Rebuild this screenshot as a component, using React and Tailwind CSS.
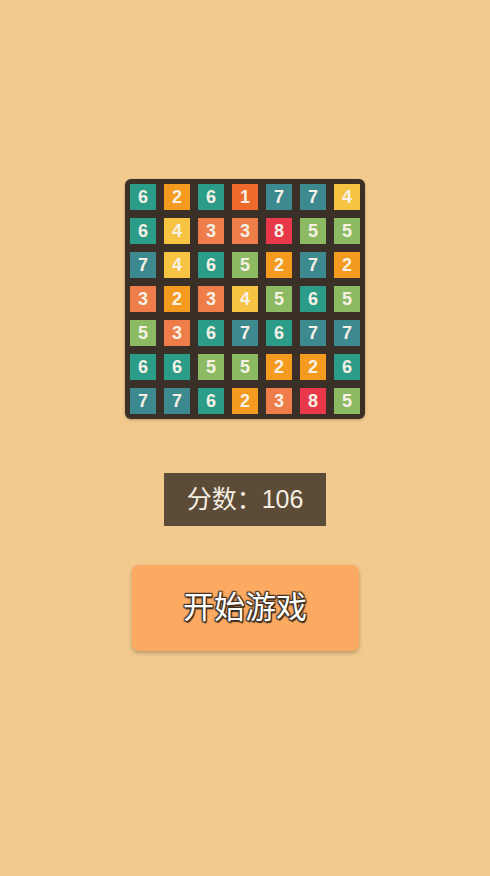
const board = [
  [6, 2, 6, 1, 7, 7, 4],
  [6, 4, 3, 3, 8, 5, 5],
  [7, 4, 6, 5, 2, 7, 2],
  [3, 2, 3, 4, 5, 6, 5],
  [5, 3, 6, 7, 6, 7, 7],
  [6, 6, 5, 5, 2, 2, 6],
  [7, 7, 6, 2, 3, 8, 5],
];

const tileColor = {
  1: 'bg-[#ee6a2b]',
  2: 'bg-[#f49a1e]',
  3: 'bg-[#ef7d49]',
  4: 'bg-[#f7c343]',
  5: 'bg-[#8bba62]',
  6: 'bg-[#2a9c88]',
  7: 'bg-[#3d8990]',
  8: 'bg-[#e8384a]',
};

const App = () => {
  return (
    <div className="min-h-screen w-full bg-[#f2ca8e] flex flex-col items-center pt-[179px]" style={{ fontFamily: '"Liberation Sans", "Noto Sans CJK SC", sans-serif' }}>
      {/* ─── Board ───────────────────────────────── */}
      <div className="w-[240px] h-[240px] bg-[#3a3028] rounded-[6px] p-[5px] grid grid-cols-7 gap-[8px] shadow-[0_1px_3px_rgba(0,0,0,0.25)]">
        {board.flat().map((n, i) => (
          <div
            key={i}
            className={`${tileColor[n]} w-[26px] h-[26px] flex items-center justify-center text-[18px] font-semibold text-[#f6f1e4] leading-none`}
          >
            {n}
          </div>
        ))}
      </div>

      {/* ─── Score ───────────────────────────────── */}
      <div className="mt-[54px] w-[162px] h-[53px] bg-[#5c4b36] flex items-center justify-center text-[25px] text-[#f4eee2]">
        分数：106
      </div>

      {/* ─── Start button ────────────────────────── */}
      <button
        className="mt-[39px] w-[227px] h-[86px] rounded-[7px] bg-[#fcaa62] shadow-[0_2px_4px_rgba(0,0,0,0.25)] flex items-center justify-center text-[31px] text-white"
        style={{ textShadow: '0 0 2px #3e3022, 1px 1px 1px #3e3022, -1px -1px 1px #3e3022, 1px -1px 1px #3e3022, -1px 1px 1px #3e3022, 1px 2px 1px #3e3022' }}
      >
        开始游戏
      </button>
    </div>
  );
};

export default App;
